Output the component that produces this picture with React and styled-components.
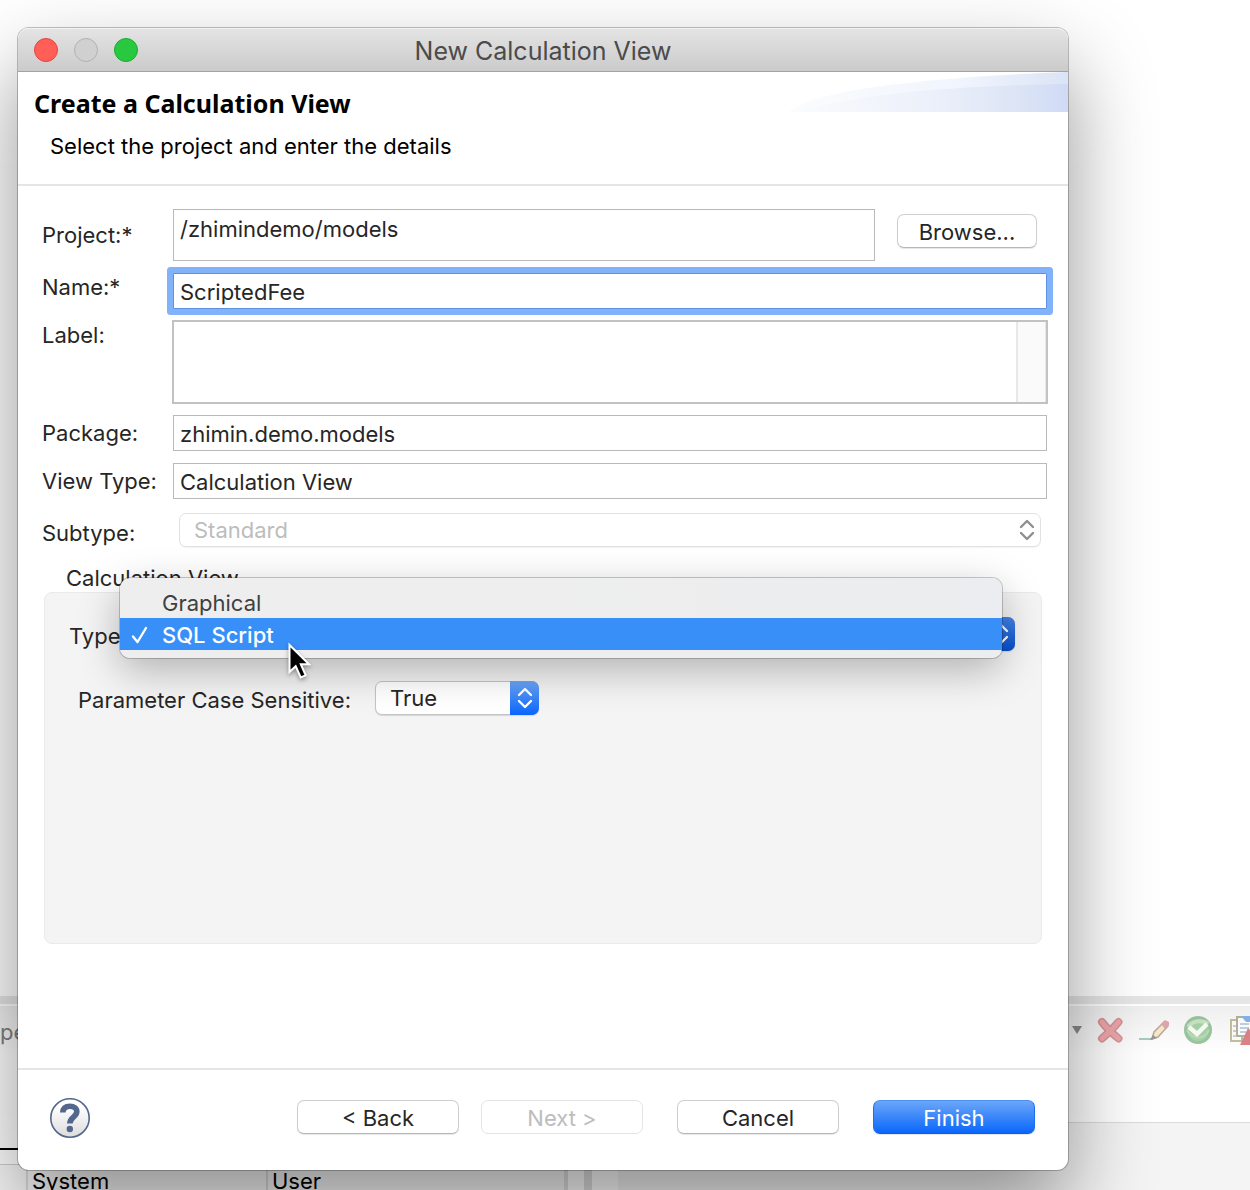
import React from "react";
import styled, { createGlobalStyle, css } from "styled-components";

const GlobalStyle = createGlobalStyle`
  *, *::before, *::after { box-sizing: border-box; }
  body {
    margin: 0;
    background: #fff;
    color: #262626;
    font-family: Inter, "Liberation Sans", sans-serif;
    font-size: 22px;
    line-height: 28px;
  }
  button, input, select, textarea { font: inherit; color: inherit; }
`;

const Desktop = styled.div`
  display: grid;
  grid-template-columns: minmax(0, 1fr);
  min-height: 100vh;
  overflow: hidden;
`;

/* Workbench behind the dialog */

const Workbench = styled.div`
  grid-area: 1 / 1;
  display: flex;
  flex-direction: column;
`;

const EditorArea = styled.div`
  flex: 1;
`;

const Sash = styled.div`
  height: 10px;
  background: #e6e6e6;
  border-bottom: 2px solid #fff;
`;

const ViewBar = styled.div`
  display: flex;
  align-items: center;
  justify-content: space-between;
  height: 48px;
  overflow: hidden;
  color: #808080;
  background: linear-gradient(#efefef, #fff);
`;

const ViewTab = styled.span`
  padding-top: 4px;
`;

const Tools = styled.div`
  display: flex;
  align-items: center;
  margin-right: -14px;
`;

const Tool = styled.button`
  display: flex;
  align-items: center;
  justify-content: center;
  width: ${(p) => (p.$narrow ? 22 : 44)}px;
  height: 32px;
  padding: 0;
  border: 0;
  background: none;
  opacity: ${(p) => (p.$narrow ? 1 : 0.6)};
`;

const BottomPanes = styled.div`
  display: flex;
  height: 136px;
`;

const TablePane = styled.div`
  display: flex;
  flex-direction: column;
  width: 568px;
  border-right: 4px solid #e0e0e0;
`;

const Underline = styled.div`
  flex: none;
  height: 96px;
  border-bottom: 2px solid #000;
`;

const SystemTable = styled.table`
  flex: none;
  width: 100%;
  margin-top: 14px;
  border-collapse: collapse;
  table-layout: fixed;
  color: #000;

  th {
    height: 32px;
    padding: 2px 4px;
    border-top: 1px solid #d0d0d0;
    border-left: 2px solid #dcdcdc;
    background: #f8f8f8;
    font-weight: 400;
    text-align: left;
  }
  th:first-child { width: 27px; border-left: 0; }
  th:nth-child(2) { width: 240px; }
`;

const Gutter = styled.div`
  width: 50px;
  background: linear-gradient(90deg, #fff 16px, #e0e0e0 16px 24px, #fff 24px);
`;

const DetailPane = styled.div`
  flex: 1;
  margin-top: 68px;
  border-top: 1px solid #dcdcdc;
  background: #f4f4f4;
`;

/* Dialog */

const Dialog = styled.section`
  grid-area: 1 / 1;
  z-index: 1;
  display: flex;
  flex-direction: column;
  margin: 28px 182px 20px 18px;
  border-radius: 11px;
  background: #fff;
  box-shadow: 0 0 0 1px rgba(0, 0, 0, 0.24), 0 40px 84px rgba(0, 0, 0, 0.42);
`;

const TitleBar = styled.header`
  display: grid;
  grid-template-columns: 120px 1fr 120px;
  align-items: center;
  height: 44px;
  border-bottom: 1px solid #a3a3a3;
  border-radius: 11px 11px 0 0;
  background: linear-gradient(#e4e4e4, #cbcbcb);
  box-shadow: inset 0 1px 0 #f3f3f3;
`;

const WindowButtons = styled.div`
  display: flex;
  gap: 16px;
  padding-left: 16px;
`;

const WindowButton = styled.button`
  width: 24px;
  height: 24px;
  padding: 0;
  border: 1px solid ${(p) => p.$edge};
  border-radius: 50%;
  background: ${(p) => p.$fill};
`;

const WindowTitle = styled.h1`
  margin: 0;
  padding-top: 2px;
  font-size: 25px;
  font-weight: 400;
  line-height: 32px;
  text-align: center;
  color: #4b4b4b;
`;

const Banner = styled.div`
  display: flex;
  justify-content: space-between;
  height: 114px;
  border-bottom: 2px solid #e5e5e5;
  color: #000;
`;

const BannerText = styled.div`
  padding: 15px 0 0 16px;
`;

const BannerTitle = styled.h2`
  margin: 0;
  font-family: "Noto Sans", "Open Sans", sans-serif;
  font-size: 25px;
  font-weight: 700;
  line-height: 32px;
`;

const BannerHint = styled.p`
  margin: 13px 0 0 16px;
`;

const Body = styled.form`
  flex: 1;
  padding-bottom: 124px;
`;

const Fields = styled.div`
  display: grid;
  grid-template-columns: 131px minmax(0, 1fr);
  row-gap: 12px;
  padding: 23px 21px 0 24px;
`;

const FieldLabel = styled.label`
  align-self: ${(p) => (p.$top ? "start" : "center")};
  padding-top: ${(p) => (p.$low ? 4 : 0)}px;
  white-space: nowrap;
`;

const boxed = css`
  display: block;
  width: 100%;
  margin: 0;
  padding: 5px 6px 3px;
  border: 1px solid #b9b9b9;
  border-radius: 0;
  outline: 0;
  background: #fff;
  resize: none;
`;

const TextInput = styled.input`
  ${boxed}
  height: 36px;
  ${(p) =>
    p.$focused &&
    css`
      border-color: #5b93e0;
      border-radius: 1px;
      box-shadow: 0 0 0 6px #82b2fa;
    `}
`;

const ProjectLine = styled.div`
  display: flex;
  align-items: flex-start;
  gap: 22px;
`;

const ProjectInput = styled.textarea`
  ${boxed}
  flex: 1;
  height: 52px;
`;

const BrowseSlot = styled.div`
  padding: 5px 10px 0 0;
`;

const NoteBox = styled.div`
  display: flex;
  height: 82px;
  border: 1px solid #c2c2c2;
  box-shadow: 0 0 0 1px #c2c2c2;
`;

const NoteInput = styled.textarea`
  ${boxed}
  flex: 1;
  border: 0;
`;

const NoteTrack = styled.div`
  width: 30px;
  border: solid #e8e8e8;
  border-width: 0 1px 0 2px;
  background: #fafafa;
`;

const PushButton = styled.button`
  width: ${(p) => (p.$small ? 140 : 162)}px;
  height: 34px;
  padding: 2px 0 0;
  border: 1px solid #cfcfcf;
  border-bottom-color: #b8b8b8;
  border-radius: 7px;
  background: #fff;
  box-shadow: 0 1px 1px rgba(0, 0, 0, 0.1);

  &:disabled {
    color: #bdbdbd;
    border-color: #e4e4e4;
    box-shadow: none;
  }
  ${(p) =>
    p.$primary &&
    css`
      color: #fff;
      border-color: #4a90f5 #1a70f0 #0a5fe6;
      background: linear-gradient(#6ba7f9, #0a66fb);
    `}
`;

const SelectBox = styled.div`
  position: relative;
  display: flex;
  align-items: center;
  width: ${(p) => (p.$compact ? "164px" : "auto")};
  margin: ${(p) => (p.$inset ? "2px 6px 4px" : "0")};
`;

const Select = styled.select`
  appearance: none;
  width: 100%;
  height: 34px;
  padding: 0 14px;
  border: 1px solid #c4c4c4;
  border-radius: 7px;
  background: #fff;
  box-shadow: 0 1px 1px rgba(0, 0, 0, 0.12);

  &:disabled {
    color: #bdbdbd;
    opacity: 1;
    border-color: #e2e2e2;
    box-shadow: 0 1px 1px rgba(0, 0, 0, 0.05);
  }
`;

const Stepper = styled.span`
  position: absolute;
  inset: 0 0 0 auto;
  display: flex;
  align-items: center;
  justify-content: center;
  width: 29px;
  border-radius: 0 7px 7px 0;
  pointer-events: none;
  color: ${(p) => (p.$muted ? "#8f8f8f" : "#fff")};
  background: ${(p) =>
    p.$muted
      ? "none"
      : p.$pressed
      ? "linear-gradient(#4484e8, #0550cf)"
      : "linear-gradient(#6ba6f8, #0a66fb)"};
`;

const Group = styled.fieldset`
  min-width: 0;
  margin: 13px 26px 0;
  padding: 0;
  border: 0;
`;

const GroupTitle = styled.legend`
  padding: 0 22px;
`;

const GroupPanel = styled.div`
  display: grid;
  align-content: start;
  row-gap: 30px;
  min-height: 352px;
  padding: 24px 26px 24px 24px;
  border: 1px solid #eaeaea;
  border-radius: 8px;
  background: #f4f4f4;
`;

const GroupRow = styled.div`
  display: grid;
  grid-template-columns: ${(p) => p.$label}px minmax(0, 1fr);
  align-items: center;
  padding-left: ${(p) => (p.$indent ? 9 : 0)}px;
`;

const Popup = styled.ul`
  position: absolute;
  top: -39px;
  left: -16px;
  right: 13px;
  z-index: 2;
  margin: 0;
  padding: 8px 0;
  border-radius: 10px;
  background: linear-gradient(90deg, #eeeeee 50%, #ebedf0);
  box-shadow: 0 0 0 1px rgba(0, 0, 0, 0.2), 0 12px 40px rgba(0, 0, 0, 0.28);
  list-style: none;
`;

const PopupItem = styled.li`
  display: flex;
  align-items: center;
  height: 32px;
  padding-top: 1px;
  color: ${(p) => (p.$active ? "#fff" : "#404040")};
  font-weight: ${(p) => (p.$active ? 500 : 400)};
  background: ${(p) => (p.$active ? "#388ff7" : "transparent")};
`;

const Mark = styled.span`
  display: flex;
  width: 42px;
  padding-left: 11px;
`;

const Pointer = styled.svg`
  position: absolute;
  left: 167px;
  top: 64px;
  filter: drop-shadow(0 2px 2px rgba(0, 0, 0, 0.35));
`;

const Footer = styled.footer`
  display: flex;
  align-items: center;
  justify-content: space-between;
  height: 102px;
  padding: 0 33px 5px 32px;
  border-top: 2px solid #e5e5e5;
`;

const HelpButton = styled.button`
  display: flex;
  padding: 0;
  border: 0;
  background: none;
`;

const Actions = styled.div`
  display: flex;
  gap: 34px;
  padding-bottom: 2px;
`;

const PagingActions = styled.div`
  display: flex;
  gap: 22px;
`;

function Arrows() {
  return (
    <svg width="16" height="22" viewBox="0 0 16 22" fill="none" stroke="currentColor" strokeWidth="2.4" strokeLinecap="round" strokeLinejoin="round" aria-hidden="true">
      <path d="M2 8 8 2l6 6M2 14l6 6 6-6" />
    </svg>
  );
}

function Swoosh() {
  return (
    <svg width="279" height="40" viewBox="0 0 279 40" aria-hidden="true">
      <defs>
        <linearGradient id="upper" x1="0" x2="1">
          <stop offset="0" stopColor="#fbfcfe" />
          <stop offset="0.6" stopColor="#f1f5fd" />
          <stop offset="1" stopColor="#dbe4f6" />
        </linearGradient>
        <linearGradient id="lower" x1="0" x2="1">
          <stop offset="0" stopColor="#fafbfe" />
          <stop offset="0.5" stopColor="#ecf0fa" />
          <stop offset="0.85" stopColor="#dae3f5" />
          <stop offset="1" stopColor="#d0daf5" />
        </linearGradient>
      </defs>
      <path d="M0 40C22 20 120 6 279 0V40Z" fill="url(#upper)" />
      <path d="M8 40C70 22 160 14 279 12V40Z" fill="url(#lower)" />
    </svg>
  );
}

function HelpIcon() {
  return (
    <svg width="40" height="40" viewBox="0 0 40 40" fill="none" aria-hidden="true">
      <defs>
        <linearGradient id="help" x1="0" y1="0" x2="0" y2="1">
          <stop offset="0.2" stopColor="#fff" />
          <stop offset="1" stopColor="#dcdcdc" />
        </linearGradient>
      </defs>
      <circle cx="20" cy="20" r="19.2" fill="url(#help)" stroke="#53678c" strokeWidth="1.6" />
      <path d="M12.800 14.500C13 9.800 16 8.200 20 8.200c4 0 6.800 2 6.800 5.400 0 5.600-7 5.600-7 12" stroke="#53678c" strokeWidth="5.600" />
      <circle cx="19.800" cy="31" r="3.200" fill="#53678c" />
    </svg>
  );
}

export default function App() {
  return (
    <Desktop>
      <GlobalStyle />
      <Workbench>
        <EditorArea />
        <Sash />
        <ViewBar>
          <ViewTab>pe</ViewTab>
          <Tools>
            <Tool type="button" $narrow aria-label="View menu">
              <svg width="10" height="8"><path d="M0 0h10L5 8Z" fill="#8b8b8b" /></svg>
            </Tool>
            <Tool type="button" aria-label="Delete">
              <svg width="26" height="26" viewBox="0 0 26 26" fill="none" strokeLinecap="round">
                <path d="M5 5Q11 13 21.500 21.500M21.500 5Q15 13 5 21.500" stroke="#c2505a" strokeWidth="8" />
                <path d="M5 5Q11 13 21.500 21.500M21.500 5Q15 13 5 21.500" stroke="#e87277" strokeWidth="5" />
              </svg>
            </Tool>
            <Tool type="button" aria-label="Edit">
              <svg width="30" height="24" viewBox="0 0 30 24">
                <path d="M0 21h14" stroke="#6fae9c" strokeWidth="2" />
                <path d="m13 21 2-7L25 4l4 4-10 11Z" fill="#f3ddb0" stroke="#93754f" strokeWidth="1.500" />
                <path d="m22 6 4-4 4 2v3l-4 4Z" fill="#cf6f7a" />
                <path d="m11 22 3-5 4 3Z" fill="#555" />
              </svg>
            </Tool>
            <Tool type="button" aria-label="Validate">
              <svg width="28" height="28" viewBox="0 0 28 28" fill="none">
                <circle cx="14" cy="14" r="12.500" fill="#6fb573" stroke="#5a9f62" strokeWidth="3" />
                <path d="M4 11c4-6 14-8 20-3" stroke="#a5d39c" strokeWidth="4" />
                <path d="M3 14c5 9 16 11 22 0" stroke="#8cc78a" strokeWidth="2" />
                <path d="m5 11 8 7L23 8" stroke="#f7fbe9" strokeWidth="4.500" />
              </svg>
            </Tool>
            <Tool type="button" aria-label="Deploy">
              <svg width="28" height="32" viewBox="0 0 28 32" fill="none">
                <path d="M3 6h11v21H3Z" fill="#fffbe8" stroke="#9c9461" strokeWidth="2" />
                <path d="M9 3h17v19H9Z" fill="#fff" stroke="#82815f" strokeWidth="2" />
                <path d="M13 2h15v6H18Z" fill="#3f82e0" />
                <path d="M12 10h9M12 14h9M12 18h6M5 12h3M5 17h3M5 22h4" stroke="#7c9acb" strokeWidth="1.500" />
                <path d="m12 31 8-17 8 8v9Z" fill="#c2333b" />
              </svg>
            </Tool>
          </Tools>
        </ViewBar>
        <BottomPanes>
          <TablePane>
            <Underline />
            <SystemTable>
              <thead>
                <tr>
                  <th aria-label="Status" />
                  <th>System</th>
                  <th>User</th>
                </tr>
              </thead>
            </SystemTable>
          </TablePane>
          <Gutter />
          <DetailPane />
        </BottomPanes>
      </Workbench>

      <Dialog role="dialog" aria-labelledby="window-title">
        <TitleBar>
          <WindowButtons>
            <WindowButton type="button" aria-label="Close" $fill="#ff5f57" $edge="#e2463f" />
            <WindowButton type="button" aria-label="Minimize" disabled $fill="#d0d0d0" $edge="#b2b2b2" />
            <WindowButton type="button" aria-label="Zoom" $fill="#28c940" $edge="#1bac2c" />
          </WindowButtons>
          <WindowTitle id="window-title">New Calculation View</WindowTitle>
        </TitleBar>

        <Banner>
          <BannerText>
            <BannerTitle>Create a Calculation View</BannerTitle>
            <BannerHint>Select the project and enter the details</BannerHint>
          </BannerText>
          <Swoosh />
        </Banner>

        <Body id="view-form" onSubmit={(e) => e.preventDefault()}>
          <Fields>
            <FieldLabel htmlFor="project">Project:*</FieldLabel>
            <ProjectLine>
              <ProjectInput id="project" rows={1} spellCheck={false} defaultValue="/zhimindemo/models" />
              <BrowseSlot>
                <PushButton type="button" $small>Browse...</PushButton>
              </BrowseSlot>
            </ProjectLine>

            <FieldLabel htmlFor="name" $top>Name:*</FieldLabel>
            <TextInput id="name" $focused spellCheck={false} defaultValue="ScriptedFee" />

            <FieldLabel htmlFor="label" $top>Label:</FieldLabel>
            <NoteBox>
              <NoteInput id="label" />
              <NoteTrack />
            </NoteBox>

            <FieldLabel htmlFor="package">Package:</FieldLabel>
            <TextInput id="package" defaultValue="zhimin.demo.models" />

            <FieldLabel htmlFor="view-type">View Type:</FieldLabel>
            <TextInput id="view-type" defaultValue="Calculation View" />

            <FieldLabel htmlFor="subtype" $low>Subtype:</FieldLabel>
            <SelectBox $inset>
              <Select id="subtype" disabled defaultValue="Standard">
                <option>Standard</option>
              </Select>
              <Stepper $muted><Arrows /></Stepper>
            </SelectBox>
          </Fields>

          <Group>
            <GroupTitle>Calculation View</GroupTitle>
            <GroupPanel>
              <GroupRow $label={67}>
                <FieldLabel htmlFor="type" $low>Type:</FieldLabel>
                <SelectBox>
                  <Select id="type" defaultValue="SQL Script">
                    <option>Graphical</option>
                    <option>SQL Script</option>
                  </Select>
                  <Stepper $pressed><Arrows /></Stepper>
                  <Popup role="listbox" aria-label="Type">
                    <PopupItem role="option" aria-selected="false">
                      <Mark />
                      Graphical
                    </PopupItem>
                    <PopupItem role="option" aria-selected="true" $active>
                      <Mark>
                        <svg width="18" height="18" viewBox="0 0 18 18" fill="none" stroke="#fff" strokeWidth="2.400" strokeLinecap="round" strokeLinejoin="round" aria-hidden="true">
                          <path d="m2 10.500 4.500 5.500L15 2" />
                        </svg>
                      </Mark>
                      SQL Script
                    </PopupItem>
                    <Pointer width="26" height="38" viewBox="0 0 26 38" aria-hidden="true">
                      <path d="M2.500 3v27l6.200-5.800 5 11.300 5-2.200-4.900-11H22Z" fill="#000" stroke="#fff" strokeWidth="2" />
                    </Pointer>
                  </Popup>
                </SelectBox>
              </GroupRow>
              <GroupRow $label={297} $indent>
                <FieldLabel htmlFor="case" $low>Parameter Case Sensitive:</FieldLabel>
                <SelectBox $compact>
                  <Select id="case" defaultValue="True">
                    <option>True</option>
                    <option>False</option>
                  </Select>
                  <Stepper><Arrows /></Stepper>
                </SelectBox>
              </GroupRow>
            </GroupPanel>
          </Group>
        </Body>

        <Footer>
          <HelpButton type="button" aria-label="Help"><HelpIcon /></HelpButton>
          <Actions>
            <PagingActions>
              <PushButton type="button">&lt; Back</PushButton>
              <PushButton type="button" disabled>Next &gt;</PushButton>
            </PagingActions>
            <PushButton type="button">Cancel</PushButton>
            <PushButton type="submit" form="view-form" $primary>Finish</PushButton>
          </Actions>
        </Footer>
      </Dialog>
    </Desktop>
  );
}
